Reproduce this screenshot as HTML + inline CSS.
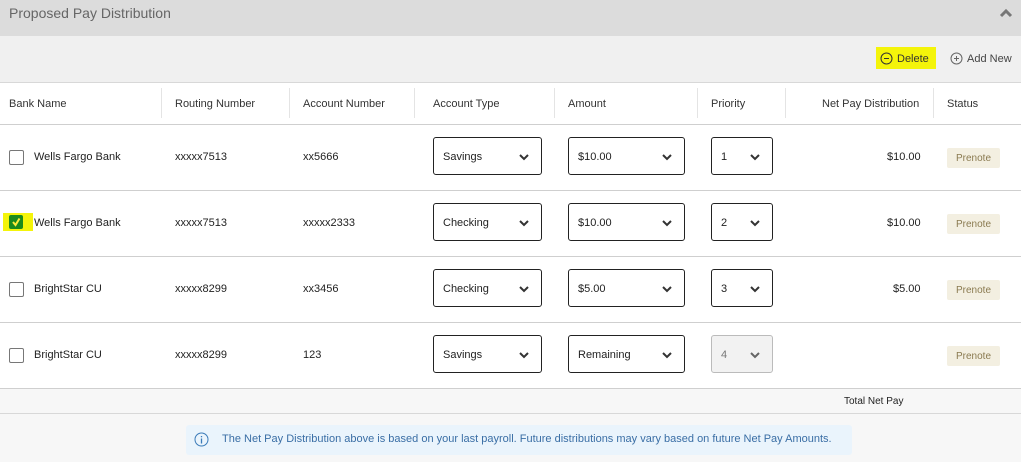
<!DOCTYPE html>
<html><head><style>
body{margin:0;width:1021px;height:462px;position:relative;font-family:"Liberation Sans",Arial,sans-serif;font-size:11px;color:#222;background:#fff;overflow:hidden}
.a{position:absolute}
.hdr{left:0;top:0;width:1021px;height:36px;background:#dcdcdc}
.bar{left:0;top:36px;width:1021px;height:46px;background:#f0f0f0;border-bottom:1px solid #d8d8d8}
.th{top:98px;font-size:11px;color:#333}
.sep{top:88px;width:1px;height:30px;background:#e4e4e4}
.line{left:0;width:1021px;height:1px;background:#cfcfcf}
.sel{height:38px;border:1px solid #222;border-radius:3px;background:#fff;box-sizing:border-box;font-size:11px;line-height:38px;padding-left:9px}
.sel svg{position:absolute;right:12px;top:16px}
.pn{width:53px;height:20px;background:#f3efe1;border-radius:2px;color:#8a7a50;font-size:10px;text-align:center;line-height:21px}
.cb{width:13px;height:13px;border:1px solid #777;border-radius:2px;background:#fff}
</style></head><body>
<div class="a hdr"></div>
<div class="a" style="left:9px;top:5px;font-size:14px;color:#666">Proposed Pay Distribution</div>
<svg class="a" style="left:999px;top:8px" width="14" height="10"><path d="M2 8 L7 3 L12 8" stroke="#777" stroke-width="3" fill="none"/></svg>
<div class="a bar"></div>
<div class="a" style="left:876px;top:47px;width:60px;height:22px;background:#f4f40a"></div>
<svg class="a" style="left:880px;top:52px" width="13" height="13"><circle cx="6.5" cy="6.5" r="5.5" stroke="#333" fill="none"/><path d="M4 6.5h5" stroke="#333"/></svg>
<div class="a" style="left:897px;top:53px;color:#333">Delete</div>
<svg class="a" style="left:950px;top:52px" width="13" height="13"><circle cx="6.5" cy="6.5" r="5.5" stroke="#666" fill="none"/><path d="M4 6.5h5M6.5 4v5" stroke="#666"/></svg>
<div class="a" style="left:967px;top:53px;color:#444">Add New</div>
<div class="a th" style="left:9px">Bank Name</div>
<div class="a th" style="left:175px">Routing Number</div>
<div class="a th" style="left:303px">Account Number</div>
<div class="a th" style="left:433px">Account Type</div>
<div class="a th" style="left:568px">Amount</div>
<div class="a th" style="left:711px">Priority</div>
<div class="a th" style="left:822px">Net Pay Distribution</div>
<div class="a th" style="left:947px">Status</div>
<div class="a sep" style="left:161px"></div><div class="a sep" style="left:289px"></div><div class="a sep" style="left:414px"></div><div class="a sep" style="left:554px"></div><div class="a sep" style="left:697px"></div><div class="a sep" style="left:785px"></div><div class="a sep" style="left:933px"></div>
<div class="a line" style="top:124px"></div>
<div class="a line" style="top:190px"></div>
<div class="a line" style="top:256px"></div>
<div class="a line" style="top:322px"></div>
<div class="a line" style="top:388px"></div>
<div class="a" style="left:0;top:389px;width:1021px;height:24px;background:#f7f7f7;border-bottom:1px solid #d8d8d8"></div>
<div class="a" style="left:844px;top:396px;font-size:10px">Total Net Pay</div>
<div class="a" style="left:0;top:414px;width:1021px;height:48px;background:#f7f7f7"></div>
<div class="a" style="left:186px;top:425px;width:666px;height:30px;background:#eaf4fc;border-radius:3px"></div>
<svg class="a" style="left:194px;top:432px" width="15" height="15"><circle cx="7.5" cy="7.5" r="6.5" stroke="#3a7ab8" fill="none"/><path d="M7.5 6.5v5M7.5 4v1.2" stroke="#3a7ab8" stroke-width="1.3"/></svg>
<div class="a" style="left:222px;top:433px;color:#3a6ea5">The Net Pay Distribution above is based on your last payroll. Future distributions may vary based on future Net Pay Amounts.</div>

<div class="a cb" style="left:9px;top:150px"></div>
<div class="a" style="left:34px;top:151px">Wells Fargo Bank</div>
<div class="a" style="left:175px;top:151px">xxxxx7513</div>
<div class="a" style="left:303px;top:151px">xx5666</div>
<div class="a sel" style="left:433px;top:137px;width:109px">Savings<svg width="10" height="7"><path d="M1 1l4 4 4-4" stroke="#333" stroke-width="2" fill="none"/></svg></div>
<div class="a sel" style="left:568px;top:137px;width:117px">$10.00<svg width="10" height="7"><path d="M1 1l4 4 4-4" stroke="#333" stroke-width="2" fill="none"/></svg></div>
<div class="a sel" style="left:711px;top:137px;width:62px">1<svg width="10" height="7"><path d="M1 1l4 4 4-4" stroke="#333" stroke-width="2" fill="none"/></svg></div>
<div class="a" style="left:887px;top:151px">$10.00</div>
<div class="a pn" style="left:947px;top:148px">Prenote</div>

<div class="a" style="left:3px;top:213px;width:30px;height:18px;background:#f4f40a"></div>
<div class="a" style="left:9px;top:215px;width:14px;height:14px;background:#1c8a1c;border-radius:2px"></div>
<svg class="a" style="left:10px;top:216px" width="12" height="12"><path d="M3 6l2.5 3L9.5 2.5" stroke="#ffeb3b" stroke-width="2" fill="none"/></svg>
<div class="a" style="left:34px;top:217px">Wells Fargo Bank</div>
<div class="a" style="left:175px;top:217px">xxxxx7513</div>
<div class="a" style="left:303px;top:217px">xxxxx2333</div>
<div class="a sel" style="left:433px;top:203px;width:109px">Checking<svg width="10" height="7"><path d="M1 1l4 4 4-4" stroke="#333" stroke-width="2" fill="none"/></svg></div>
<div class="a sel" style="left:568px;top:203px;width:117px">$10.00<svg width="10" height="7"><path d="M1 1l4 4 4-4" stroke="#333" stroke-width="2" fill="none"/></svg></div>
<div class="a sel" style="left:711px;top:203px;width:62px">2<svg width="10" height="7"><path d="M1 1l4 4 4-4" stroke="#333" stroke-width="2" fill="none"/></svg></div>
<div class="a" style="left:887px;top:217px">$10.00</div>
<div class="a pn" style="left:947px;top:214px">Prenote</div>

<div class="a cb" style="left:9px;top:282px"></div>
<div class="a" style="left:34px;top:283px">BrightStar CU</div>
<div class="a" style="left:175px;top:283px">xxxxx8299</div>
<div class="a" style="left:303px;top:283px">xx3456</div>
<div class="a sel" style="left:433px;top:269px;width:109px">Checking<svg width="10" height="7"><path d="M1 1l4 4 4-4" stroke="#333" stroke-width="2" fill="none"/></svg></div>
<div class="a sel" style="left:568px;top:269px;width:117px">$5.00<svg width="10" height="7"><path d="M1 1l4 4 4-4" stroke="#333" stroke-width="2" fill="none"/></svg></div>
<div class="a sel" style="left:711px;top:269px;width:62px">3<svg width="10" height="7"><path d="M1 1l4 4 4-4" stroke="#333" stroke-width="2" fill="none"/></svg></div>
<div class="a" style="left:893px;top:283px">$5.00</div>
<div class="a pn" style="left:947px;top:280px">Prenote</div>

<div class="a cb" style="left:9px;top:348px"></div>
<div class="a" style="left:34px;top:349px">BrightStar CU</div>
<div class="a" style="left:175px;top:349px">xxxxx8299</div>
<div class="a" style="left:303px;top:349px">123</div>
<div class="a sel" style="left:433px;top:335px;width:109px">Savings<svg width="10" height="7"><path d="M1 1l4 4 4-4" stroke="#333" stroke-width="2" fill="none"/></svg></div>
<div class="a sel" style="left:568px;top:335px;width:117px">Remaining<svg width="10" height="7"><path d="M1 1l4 4 4-4" stroke="#333" stroke-width="2" fill="none"/></svg></div>
<div class="a sel" style="left:711px;top:335px;width:62px;background:#f2f2f2;border-color:#bbb;color:#777">4<svg width="10" height="7"><path d="M1 1l4 4 4-4" stroke="#666" stroke-width="2" fill="none"/></svg></div>
<div class="a pn" style="left:947px;top:346px">Prenote</div>
</body></html>
